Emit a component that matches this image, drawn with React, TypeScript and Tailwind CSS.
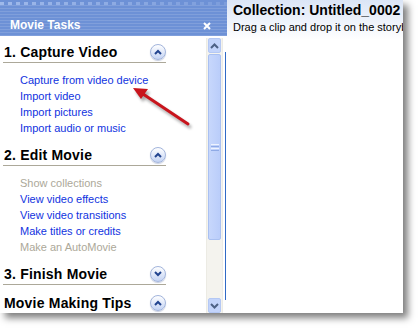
import { ReactNode } from "react";

const font = "font-['Liberation_Sans',Arial,sans-serif]";

const Toggle = ({ up }: { up: boolean }) => (
  <div className="w-4 h-4 rounded-full border border-[#a3b5dc] bg-gradient-to-b from-white to-[#c4d3f3] flex items-center justify-center shadow-[0_1px_1px_rgba(90,110,160,0.35)]">
    <svg width="8" height="6" viewBox="0 0 8 6">
      <path
        d={up ? "M1 5 L4 2 L7 5" : "M1 1 L4 4 L7 1"}
        stroke="#22448f"
        strokeWidth="2"
        fill="none"
      />
    </svg>
  </div>
);

const Title = ({ children, up, mt }: { children: ReactNode; up: boolean; mt: string }) => (
  <div className={`${mt} flex items-center justify-between w-[163px] border-b border-[#aca899] pb-[2px]`}>
    <span className="pl-[1px] text-[14px] leading-[16px] font-bold tracking-[0.2px] text-black whitespace-nowrap">
      {children}
    </span>
    <Toggle up={up} />
  </div>
);

const Links = ({ items }: { items: [string, boolean][] }) => (
  <div className="mt-[9px] flex flex-col pl-[17px]">
    {items.map(([label, on]) => (
      <span
        key={label}
        className={`text-[11px] leading-[16px] whitespace-nowrap ${on ? "text-[#1133e0]" : "text-[#aca899]"}`}
      >
        {label}
      </span>
    ))}
  </div>
);

const ScrollBtn = ({ up }: { up: boolean }) => (
  <div className="h-[15px] rounded-[2px] bg-[#c3d4fb] border border-[#b4c8f4] flex items-center justify-center">
    <svg width="9" height="6" viewBox="0 0 9 6">
      <path
        d={up ? "M1 5 L4.5 1.5 L8 5" : "M1 1 L4.5 4.5 L8 1"}
        stroke="#4d6185"
        strokeWidth="2"
        fill="none"
      />
    </svg>
  </div>
);

export default function App() {
  return (
    <div className={`w-[419px] h-[329px] bg-white ${font}`}>
      <div className="relative w-[403px] h-[313px] bg-white flex overflow-hidden shadow-[5px_5px_7px_rgba(0,0,0,0.5)]">
        {/* task pane */}
        <div className="w-[227px] flex flex-col">
          <div className="h-[36px] bg-[#6d91d6] flex flex-col">
            <div className="mt-[2px] h-[3px] bg-[repeating-linear-gradient(90deg,#9fb9ea_0_4px,transparent_4px_8px)] [mask-image:linear-gradient(90deg,black,rgba(0,0,0,0.3))]" />
            <div className="flex-1 flex items-end justify-between pl-[10px] pr-[16px] pb-[4px] bg-[repeating-linear-gradient(180deg,rgba(255,255,255,0.13)_0_1px,transparent_1px_3px)]">
              <span className="text-[12px] leading-[14px] font-bold text-white">Movie Tasks</span>
              <svg width="8" height="8" viewBox="0 0 8 8" className="mb-[2px]">
                <path d="M1 1 L7 7 M7 1 L1 7" stroke="white" strokeWidth="2" />
              </svg>
            </div>
          </div>
          <div className="flex-1 flex">
            <div className="w-[206px] pl-[3px] pt-[8px] flex flex-col">
              <Title up mt="mt-0">1. Capture Video</Title>
              <Links
                items={[
                  ["Capture from video device", true],
                  ["Import video", true],
                  ["Import pictures", true],
                  ["Import audio or music", true],
                ]}
              />
              <Title up mt="mt-[11px]">2. Edit Movie</Title>
              <Links
                items={[
                  ["Show collections", false],
                  ["View video effects", true],
                  ["View video transitions", true],
                  ["Make titles or credits", true],
                  ["Make an AutoMovie", false],
                ]}
              />
              <Title up={false} mt="mt-[11px]">3. Finish Movie</Title>
              <div className="mt-[10px] flex items-center justify-between w-[163px]">
                <span className="pl-[1px] text-[14px] leading-[16px] font-bold tracking-[0.2px] text-black whitespace-nowrap">
                  Movie Making Tips
                </span>
                <Toggle up />
              </div>
            </div>
            <div className="w-[17px] mt-[2px] px-[1px] flex flex-col bg-[#f4f3ee] border-x border-[#ecebe4]">
              <ScrollBtn up />
              <div className="mt-[1px] h-[186px] rounded-[2px] bg-gradient-to-r from-[#c7d7fc] to-[#bacdfa] border border-[#a9c0f1] flex items-center justify-center">
                <div className="w-[8px] flex flex-col gap-[1px]">
                  <div className="h-[1px] bg-[#eef3fe]" />
                  <div className="h-[1px] bg-[#8faae6]" />
                  <div className="h-[1px] bg-[#eef3fe]" />
                  <div className="h-[1px] bg-[#8faae6]" />
                </div>
              </div>
              <div className="flex-1" />
              <ScrollBtn up={false} />
            </div>
            <div className="w-[4px] flex justify-end pt-[16px] pb-[13px]">
              <div className="w-[1px] bg-[#316ac5] mr-[1px]" />
            </div>
          </div>
        </div>

        {/* collection pane */}
        <div className="flex-1 flex flex-col overflow-hidden">
          <div className="h-[40px] bg-gradient-to-b from-[#dbe5f6] to-white pl-[6px] pt-[2px] whitespace-nowrap">
            <div className="text-[14px] leading-[16px] font-bold text-black">Collection: Untitled_0002</div>
            <div className="text-[11px] leading-[14px] text-black mt-[2px]">
              Drag a clip and drop it on the storyboard below.
            </div>
          </div>
        </div>

        {/* red callout arrow */}
        <svg className="absolute left-[125px] top-[80px]" width="75" height="55" viewBox="0 0 75 55">
          <defs>
            <filter id="sh" x="-20%" y="-20%" width="140%" height="140%">
              <feGaussianBlur stdDeviation="1.5" />
            </filter>
          </defs>
          <g transform="translate(2 3)" opacity="0.35" filter="url(#sh)">
            <path d="M63 44 L18 14" stroke="#000" strokeWidth="3" strokeLinecap="round" />
            <path d="M8 8 L23 9 L16 19 Z" fill="#000" />
          </g>
          <path d="M63 44 L18 14" stroke="#c8141c" strokeWidth="3" strokeLinecap="round" />
          <path d="M8 8 L23 9 L16 19 Z" fill="#c8141c" />
        </svg>
      </div>
    </div>
  );
}
